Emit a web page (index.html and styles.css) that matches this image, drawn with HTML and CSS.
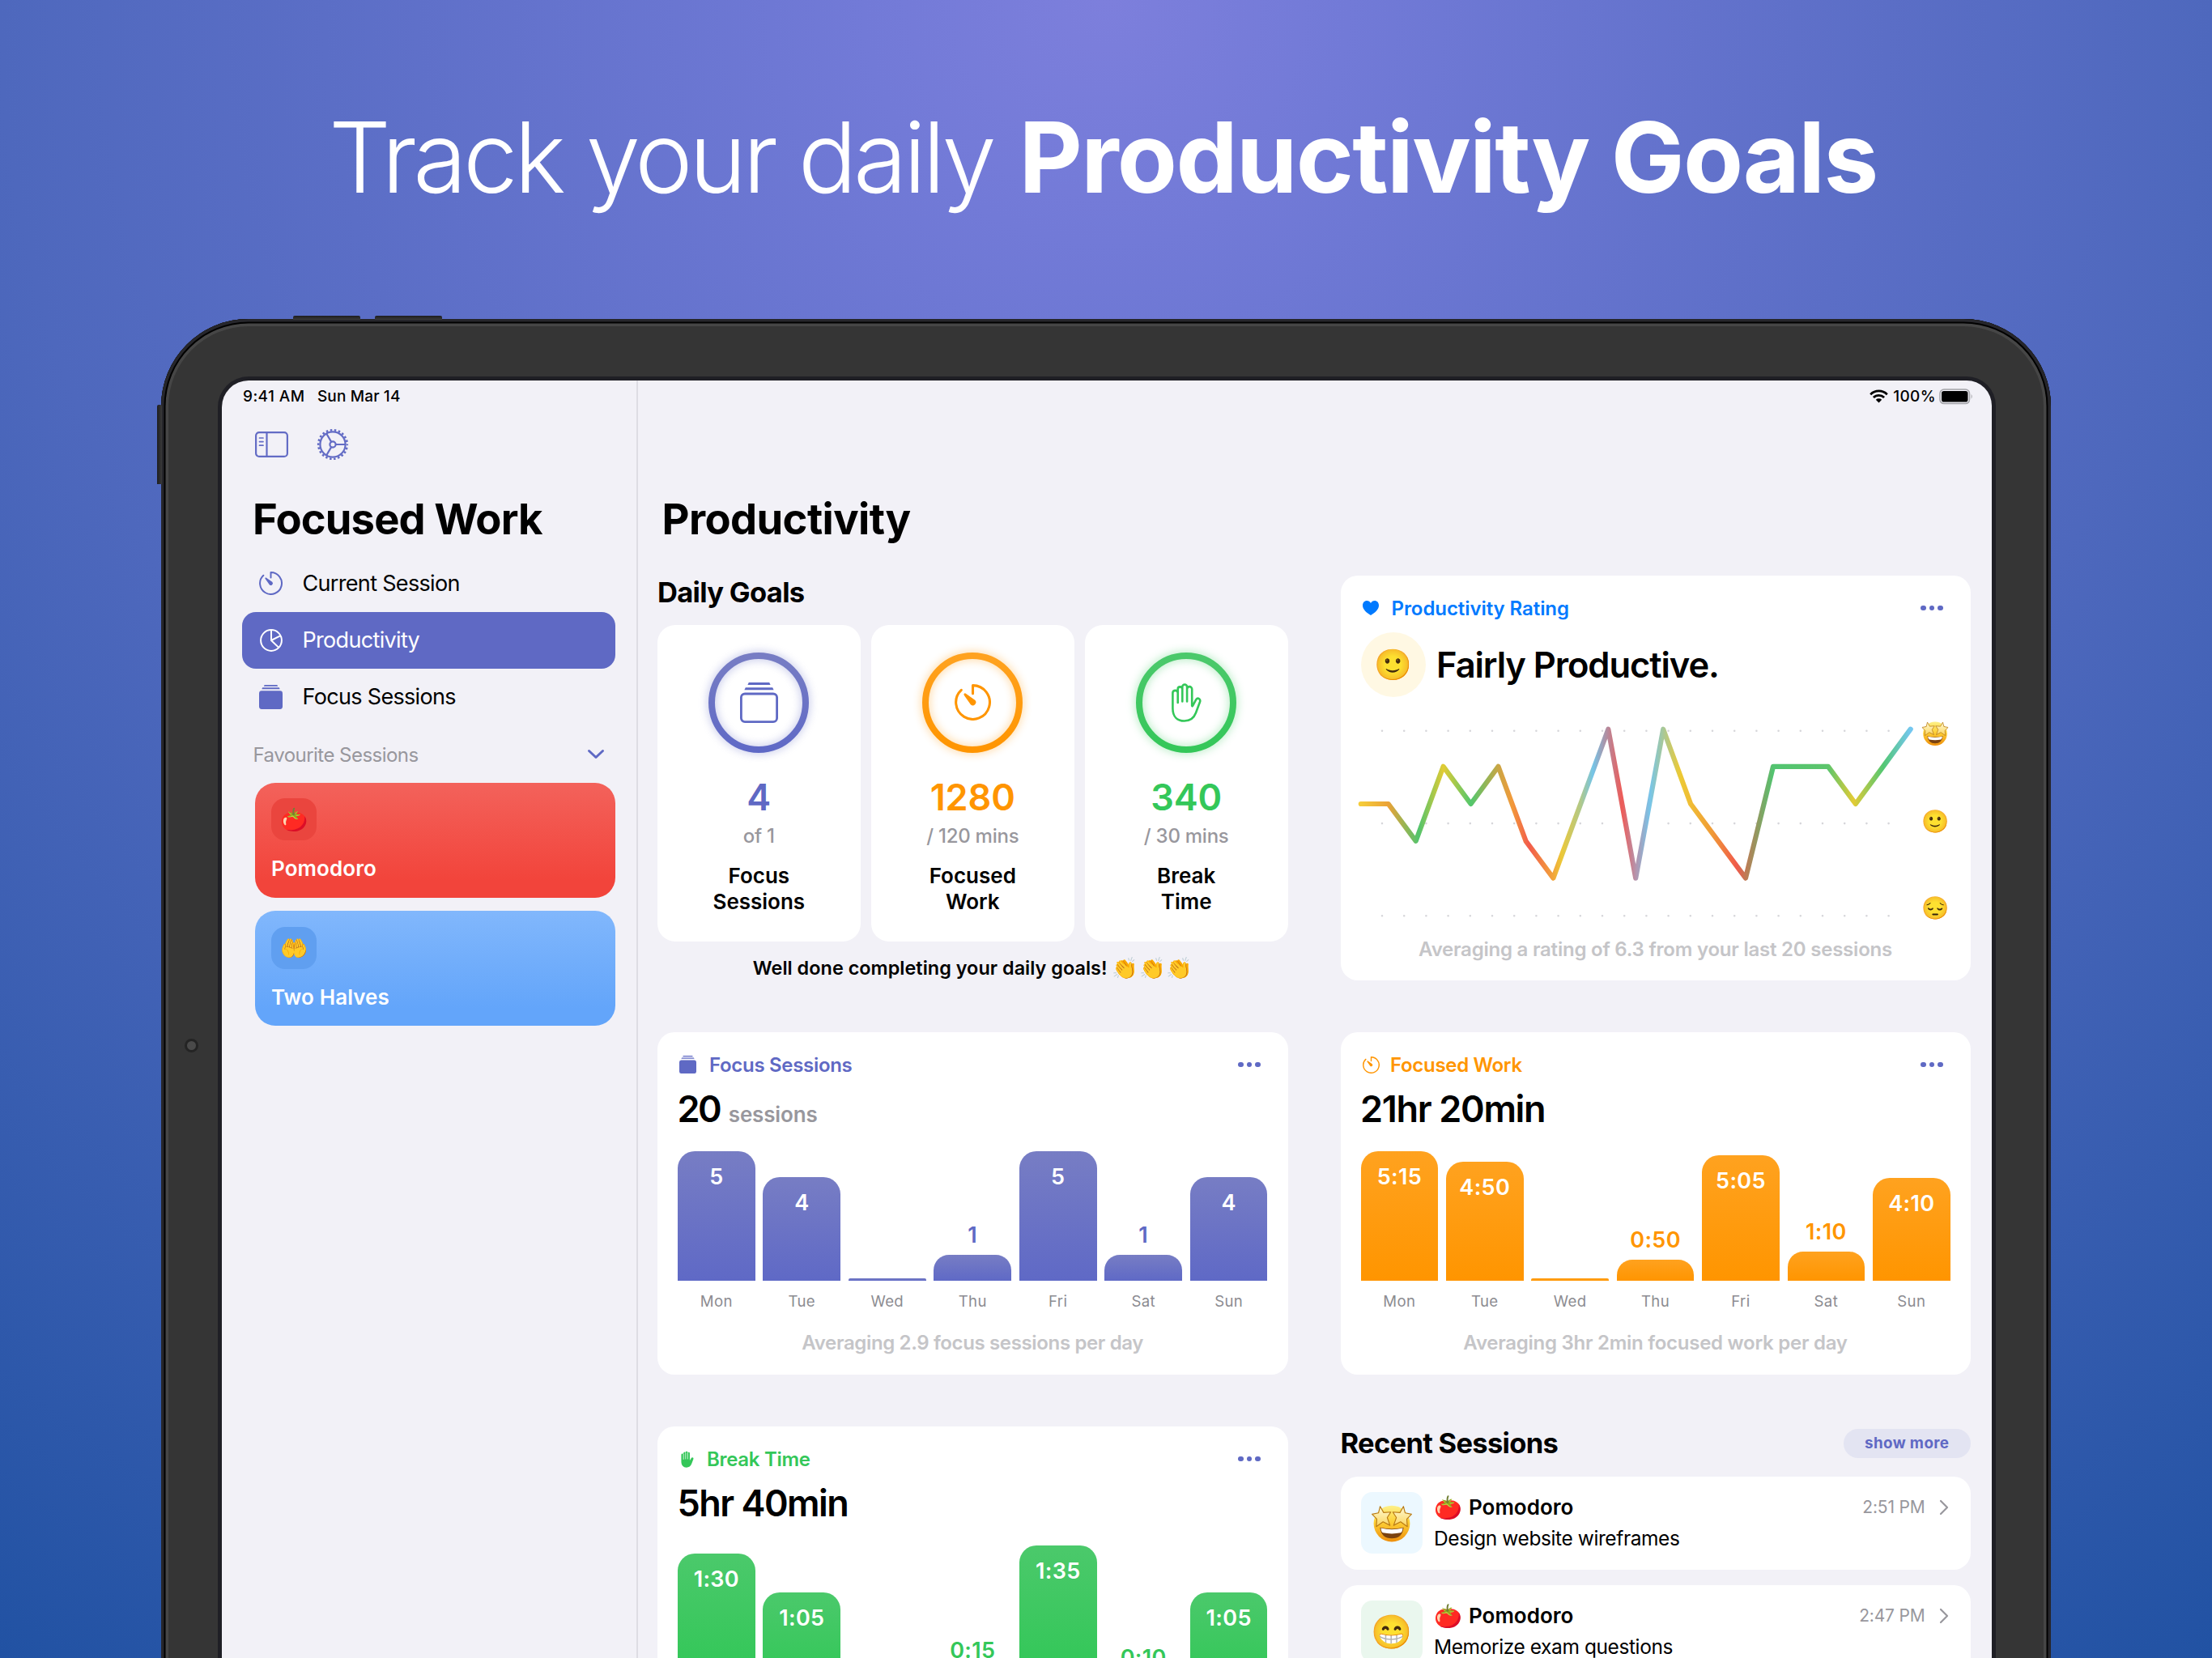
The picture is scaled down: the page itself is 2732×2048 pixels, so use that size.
FILE: index.html
```html
<!DOCTYPE html>
<html lang="en">
<head>
<meta charset="utf-8">
<title>Focused Work – Productivity</title>
<link rel="stylesheet" href="styles.css">
</head>
<body>
<svg class="defs" aria-hidden="true">
  <defs>
    <linearGradient id="g-purple" x1="0" y1="0" x2="0" y2="1"><stop offset="0" stop-color="#777dc4"/><stop offset="1" stop-color="#5f69c6"/></linearGradient>
    <linearGradient id="g-orange" x1="0" y1="0" x2="0" y2="1"><stop offset="0" stop-color="#ffa21f"/><stop offset="1" stop-color="#ff9500"/></linearGradient>
    <linearGradient id="g-green" x1="0" y1="0" x2="0" y2="1"><stop offset="0" stop-color="#4bc96b"/><stop offset="1" stop-color="#34c759"/></linearGradient>
    <linearGradient id="g-face" x1="0" y1="0" x2="0" y2="1"><stop offset="0" stop-color="#fdf18a"/><stop offset=".45" stop-color="#fdd037"/><stop offset="1" stop-color="#ee8f0c"/></linearGradient>
    <linearGradient id="g-star" x1="0" y1="0" x2="0" y2="1"><stop offset="0" stop-color="#fffbd6"/><stop offset="1" stop-color="#fbd45c"/></linearGradient>
    <symbol id="timer" viewBox="0 0 44 44">
      <path d="M22 11.5V1.6A20.4 20.4 0 1 1 8.1 7.1" fill="none" stroke="currentColor" stroke-width="3" stroke-linecap="round" stroke-linejoin="round"/>
      <path d="M11.6 13.6a1.4 1.4 0 0 1 2-2L24.6 19.4a3.6 3.6 0 1 1-5.2 5.2Z" fill="currentColor"/>
    </symbol>
    <symbol id="stack" viewBox="0 0 47 44" preserveAspectRatio="none">
      <path d="M10.8 0H36.2L37.6 2.500H9.4ZM6.8 4.800H40.2L41.6 7.600H5.4Z" fill="currentColor"/>
      <rect x="0" y="10.800" width="47" height="33.200" rx="5" fill="currentColor"/>
    </symbol>
    <symbol id="stack-line" viewBox="0 0 47 50">
      <path d="M10.8 0H36.2L37.6 3H9.4ZM6.8 6.2H40.2L41.6 9.2H5.4Z" fill="currentColor"/>
      <rect x="1.4" y="14" width="44.2" height="34.6" rx="4.6" fill="none" stroke="currentColor" stroke-width="2.8"/>
    </symbol>
    <symbol id="hand-line" viewBox="0 0 37 48">
      <path d="M7.7 24V11.5a3.2 3.2 0 0 0-6.3 0V31C1.4 41 7 46.5 15.8 46.5C23 46.5 27.5 43 30 36.5L35 23C36.2 19.4 32.4 17.2 30.2 20.2L26.6 27Q25.5 29.4 25.2 27.5V7.2a3 3 0 0 0-6.1 0M19.1 22.5V4.4a2.9 2.9 0 0 0-5.8 0V22.5M13.3 7.2a2.8 2.8 0 0 0-5.6 0V24M19.1 7V22.5" fill="none" stroke="currentColor" stroke-width="2.600" stroke-linecap="round" stroke-linejoin="round"/>
    </symbol>
    <symbol id="hand" viewBox="0 0 37 48">
      <path d="M1 11.5a3.2 3.2 0 0 1 6.3-1V7a3 3 0 0 1 6-1V4.2a3 3 0 0 1 6 0V6a3 3 0 0 1 6 1.2V27.5L30 20C32.4 17 37 19.4 35.6 23.2L30.6 37C28 44 23 47.6 15.8 47.6C7 47.6 1 41 1 31Z" fill="currentColor"/>
      <path d="M7.4 10V24M13.4 6V23M19.4 6V23" stroke="#fff" stroke-width="1.7" stroke-linecap="round"/>
    </symbol>
    <symbol id="heart" viewBox="0 0 20 18">
      <path d="M10 18C5 15 0 11 0 5.8C0 2.4 2.2 0 5.2 0C7.3 0 9 1.200 10 3C11 1.200 12.700 0 14.800 0C17.800 0 20 2.400 20 5.800C20 11 15 15 10 18Z" fill="currentColor"/>
    </symbol>
    <symbol id="star-face" viewBox="0 0 48 46">
      <circle cx="24" cy="24" r="21.500" fill="url(#g-face)"/>
      <path d="M10 28.500Q24 32 38 28.500Q36.500 41.500 24 41.500Q11.500 41.500 10 28.500Z" fill="#7a4210"/>
      <path d="M11 29.200Q24 32.500 37 29.200Q36.500 34 34.500 34.800Q24 37 13.500 34.800Q11.500 34 11 29.200Z" fill="#fff"/>
      <g fill="url(#g-star)" stroke="#b97a14" stroke-width="1.100" stroke-linejoin="round">
        <path d="M10.200 3.500L14.300 10.900L22.800 10.300L18.600 16.800L21.800 26L13.600 21.800L5.600 27.500L6.200 18.600L.6 12.800L8.200 11.300Z"/>
        <path d="M37.800 3.500L33.700 10.900L25.200 10.300L29.400 16.800L26.200 26L34.400 21.800L42.400 27.500L41.800 18.600L47.400 12.800L39.800 11.300Z"/>
      </g>
    </symbol>
  </defs>
</svg>

<h1 class="headline">Track your daily <strong>Productivity Goals</strong></h1>

<div class="device">
  <i class="key key-up"></i><i class="key key-down"></i><i class="key key-power"></i><i class="camera"></i>
  <div class="screen">
    <aside class="sidebar">
      <div class="status"><span class="time">9:41 AM</span><span>Sun Mar 14</span></div>
      <div class="toolbar">
        <svg width="41" height="32" viewBox="0 0 41 32" fill="none" stroke="currentColor" stroke-width="2.200" stroke-linecap="round"><rect x="1.100" y="1.100" width="38.800" height="29.800" rx="4"/><path d="M14.500 1V31" /><path d="M5.500 8H10M5.500 12.600H10M5.500 17.200H10" stroke-width="1.700"/></svg>
        <svg class="gear" width="40" height="40" viewBox="0 0 40 40" fill="none" stroke="currentColor" stroke-width="2.200"><circle cx="20" cy="20" r="15.600"/><circle cx="20" cy="20" r="17.800" stroke-width="2.600" stroke-dasharray="2.500 2.584" stroke-dashoffset="1.250"/><circle cx="20" cy="20" r="3.600"/><path d="M23.600 20H36M18.200 16.900L12 6.200M18.200 23.100L12 33.800"/></svg>
      </div>
      <h2 class="app-title">Focused Work</h2>
      <nav>
        <a class="nav-item"><svg width="29" height="29"><use href="#timer"/></svg>Current Session</a>
        <a class="nav-item active"><svg width="28" height="28" viewBox="0 0 28 28" fill="none" stroke="currentColor" stroke-width="2" stroke-linejoin="round"><circle cx="14" cy="14" r="12.900"/><path d="M14 1V14L23 22.600M14 14L25.600 8.200"/></svg>Productivity</a>
        <a class="nav-item"><svg width="29" height="30"><use href="#stack"/></svg>Focus Sessions</a>
      </nav>
      <div class="fav-head"><span>Favourite Sessions</span><svg width="22" height="14" viewBox="0 0 22 14"><path d="M2.500 2.500L11 10.500L19.500 2.500" fill="none" stroke="currentColor" stroke-width="3" stroke-linecap="round" stroke-linejoin="round"/></svg></div>
      <div class="fav red"><span class="tile">🍅</span><b>Pomodoro</b></div>
      <div class="fav blue"><span class="tile">🤲</span><b>Two Halves</b></div>
    </aside>

    <main class="main">
      <div class="status right">
        <svg width="23" height="17" viewBox="0 0 23 17"><g fill="none" stroke="#000" stroke-width="2.800"><path d="M1.200 6.200A14.600 14.600 0 0 1 21.800 6.200"/><path d="M4.900 10A9.400 9.400 0 0 1 18.100 10"/></g><path d="M7.800 12.800A5.400 5.400 0 0 1 15.200 12.800L11.500 16.600Z"/></svg>
        <span class="pct">100%</span>
        <svg width="42" height="20" viewBox="0 0 42 20"><rect x="1" y="1" width="36.500" height="17.600" rx="5" fill="none" stroke="#a3a3a8" stroke-width="1.500"/><rect x="3" y="3" width="32.500" height="13.600" rx="2.800"/><path d="M39.600 6.800Q41.800 9.800 39.600 12.800Z" fill="#a3a3a8"/></svg>
      </div>
      <h2 class="page-title">Productivity</h2>

      <div class="grid">
        <section class="goals">
          <h3 class="section-title">Daily Goals</h3>
          <div class="goal-row">
            <div class="goal purple">
              <div class="ring"><svg class="circle" viewBox="0 0 124 124"><circle cx="62" cy="62" r="58" stroke="url(#g-purple)"/></svg><svg width="47" height="50"><use href="#stack-line"/></svg></div>
              <b class="num">4</b><span class="of">of 1</span><span class="what">Focus<br>Sessions</span>
            </div>
            <div class="goal orange">
              <div class="ring"><svg class="circle" viewBox="0 0 124 124"><circle cx="62" cy="62" r="58" stroke="url(#g-orange)"/></svg><svg width="45" height="45"><use href="#timer"/></svg></div>
              <b class="num">1280</b><span class="of">/ 120 mins</span><span class="what">Focused<br>Work</span>
            </div>
            <div class="goal green">
              <div class="ring"><svg class="circle" viewBox="0 0 124 124"><circle cx="62" cy="62" r="58" stroke="url(#g-green)"/></svg><svg width="37" height="48"><use href="#hand-line"/></svg></div>
              <b class="num">340</b><span class="of">/ 30 mins</span><span class="what">Break<br>Time</span>
            </div>
          </div>
          <p class="praise">Well done completing your daily goals! <span class="claps"><i>👏</i><i>👏</i><i>👏</i></span></p>
        </section>

        <section class="card rating">
          <header class="card-head blue-text"><svg width="20" height="18"><use href="#heart"/></svg><span class="h-rating">Productivity Rating</span><span class="dots"><i></i><i></i><i></i></span></header>
          <div class="verdict"><span class="mood">🙂</span><b>Fairly Productive.</b></div>
          <svg class="line-chart" viewBox="0 0 778 290">
            <defs><linearGradient id="g-line" gradientUnits="userSpaceOnUse" x1="24.800" y1="0" x2="703.700" y2="0">
              <stop offset="0" stop-color="#f5cc3a"/><stop offset=".05" stop-color="#eba236"/><stop offset=".105" stop-color="#52c46d"/><stop offset=".15" stop-color="#e2cb34"/><stop offset=".2" stop-color="#52c76d"/><stop offset=".25" stop-color="#c9a645"/><stop offset=".275" stop-color="#f29a3a"/><stop offset=".306" stop-color="#f25b4c"/><stop offset=".35" stop-color="#f2a53a"/><stop offset=".365" stop-color="#ecc838"/><stop offset=".4" stop-color="#b0c98b"/><stop offset=".422" stop-color="#74c5e8"/><stop offset=".45" stop-color="#b98799"/><stop offset=".475" stop-color="#ee5b57"/><stop offset=".5" stop-color="#b594ad"/><stop offset=".526" stop-color="#77c5ea"/><stop offset=".55" stop-color="#a8c898"/><stop offset=".58" stop-color="#ecca35"/><stop offset=".6" stop-color="#f0bd35"/><stop offset=".638" stop-color="#f09b36"/><stop offset=".684" stop-color="#f0594b"/><stop offset=".7" stop-color="#bf7a55"/><stop offset=".75" stop-color="#52c470"/><stop offset=".85" stop-color="#5cc56c"/><stop offset=".896" stop-color="#e3cb35"/><stop offset=".95" stop-color="#52c772"/><stop offset="1" stop-color="#74c7f0"/>
            </linearGradient></defs>
            <g fill="none" stroke="#d6d6da" stroke-width="2.600" stroke-linecap="round" stroke-dasharray="0 27.200">
              <path d="M51 41.800H680"/><path d="M51 156.100H680"/><path d="M51 270.300H680"/>
            </g>
            <polyline fill="none" stroke="url(#g-line)" stroke-width="6.200" stroke-linecap="round" stroke-linejoin="round" points="24.8,132 58.7,132 92.700,177.800 126.600,85.800 160.600,132 194.500,85.800 228.500,177.800 262.400,223.600 330.300,39.700 364.200,223.600 398.200,39.700 432.100,132 466.100,177.800 500,223.600 534,85.800 601.900,85.800 635.800,132 669.800,85.800 703.700,39.700"/>
            <svg x="717.500" y="28" width="33" height="33"><use href="#star-face"/></svg>
            <text class="axis-face" x="734" y="163">🙂</text>
            <text class="axis-face" x="734" y="270">😔</text>
          </svg>
          <p class="foot f1">Averaging a rating of 6.3 from your last 20 sessions</p>
        </section>

        <section class="card bars purple">
          <header class="card-head"><svg width="21" height="22"><use href="#stack"/></svg><span>Focus Sessions</span><span class="dots"><i></i><i></i><i></i></span></header>
          <div class="total"><b class="tight">20</b><small>sessions</small></div>
          <div class="chart">
            <div class="bar" style="height:160px"><span>5</span></div>
            <div class="bar" style="height:128px"><span>4</span></div>
            <div class="bar nil" style="height:3px"></div>
            <div class="bar low" style="height:32px"><span>1</span></div>
            <div class="bar" style="height:160px"><span>5</span></div>
            <div class="bar low" style="height:32px"><span>1</span></div>
            <div class="bar" style="height:128px"><span>4</span></div>
          </div>
          <div class="days"><span>Mon</span><span>Tue</span><span>Wed</span><span>Thu</span><span>Fri</span><span>Sat</span><span>Sun</span></div>
          <p class="foot f2">Averaging 2.9 focus sessions per day</p>
        </section>

        <section class="card bars orange">
          <header class="card-head"><svg width="21" height="21"><use href="#timer"/></svg><span class="h-work">Focused Work</span><span class="dots"><i></i><i></i><i></i></span></header>
          <div class="total"><b>21hr 20min</b></div>
          <div class="chart">
            <div class="bar" style="height:160px"><span>5:15</span></div>
            <div class="bar" style="height:147px"><span>4:50</span></div>
            <div class="bar nil" style="height:3px"></div>
            <div class="bar low" style="height:25.500px"><span>0:50</span></div>
            <div class="bar" style="height:155px"><span>5:05</span></div>
            <div class="bar low" style="height:35.500px"><span>1:10</span></div>
            <div class="bar" style="height:127px"><span>4:10</span></div>
          </div>
          <div class="days"><span>Mon</span><span>Tue</span><span>Wed</span><span>Thu</span><span>Fri</span><span>Sat</span><span>Sun</span></div>
          <p class="foot f2 f3">Averaging 3hr 2min focused work per day</p>
        </section>

        <section class="card bars tall green">
          <header class="card-head hand-head"><svg width="16" height="21"><use href="#hand"/></svg><span>Break Time</span><span class="dots"><i></i><i></i><i></i></span></header>
          <div class="total"><b>5hr 40min</b></div>
          <div class="chart">
            <div class="bar" style="height:173px"><span>1:30</span></div>
            <div class="bar" style="height:125px"><span>1:05</span></div>
            <div class="bar nil" style="height:3px"></div>
            <div class="bar low" style="height:29px"><span>0:15</span></div>
            <div class="bar" style="height:183px"><span>1:35</span></div>
            <div class="bar low" style="height:19.500px"><span>0:10</span></div>
            <div class="bar" style="height:125px"><span>1:05</span></div>
          </div>
        </section>

        <section class="recent">
          <div class="recent-head"><h3 class="section-title">Recent Sessions</h3><button class="more">show more</button></div>
          <div class="list">
            <article class="item">
              <span class="item-tile sky"><svg width="50" height="48"><use href="#star-face"/></svg></span>
              <div class="item-text"><p class="item-title"><i>🍅</i>Pomodoro</p><p class="item-sub">Design website wireframes</p></div>
              <span class="when">2:51 PM<svg width="12" height="20" viewBox="0 0 12 20"><path d="M2 2L10 10L2 18" fill="none" stroke="currentColor" stroke-width="2.200" stroke-linecap="round" stroke-linejoin="round"/></svg></span>
            </article>
            <article class="item">
              <span class="item-tile mint">😁</span>
              <div class="item-text"><p class="item-title"><i>🍅</i>Pomodoro</p><p class="item-sub">Memorize exam questions</p></div>
              <span class="when">2:47 PM<svg width="12" height="20" viewBox="0 0 12 20"><path d="M2 2L10 10L2 18" fill="none" stroke="currentColor" stroke-width="2.200" stroke-linecap="round" stroke-linejoin="round"/></svg></span>
            </article>
          </div>
        </section>
      </div>
    </main>
  </div>
</div>
</body>
</html>
```
FILE: styles.css
```css
* { box-sizing: border-box; margin: 0; padding: 0; }
html { height: 100%; }
body {
  width: 2732px;
  height: 2048px;
  overflow: hidden;
  font-family: Inter, "Noto Sans", "Noto Color Emoji", sans-serif;
  color: #000;
  background: radial-gradient(circle 2462px at 1366px 0, #7d7fdc 0, #727ad7 300px, #5b6ec6 966px, #4e68bd 1366px, #2152a3 2462px);
}
i { font-style: normal; }
.defs { position: absolute; width: 0; height: 0; }

.headline {
  height: 394px;
  padding: 124px 0 0 406px;
  font-size: 121px;
  line-height: 140px;
  font-weight: 340;
  letter-spacing: -.0385em;
  color: #fff;
  white-space: nowrap;
}
.headline strong { font-weight: 700; letter-spacing: -.0135em; margin-left: 3px; }

/* Tablet body */
.device {
  position: relative;
  width: 2334px;
  height: 1654px;
  margin-left: 199px;
  padding: 76px 73px 0 75px;
  border-radius: 108px 108px 0 0;
  background: #353535;
  box-shadow: inset 0 3.500px #26262b, inset 3.500px 0 #26262b, inset -3.500px 0 #26262b;
}
.device::before {
  content: "";
  position: absolute;
  inset: 0 0 -20px;
  border-radius: inherit;
  clip-path: inset(0 0 20px);
  box-shadow: inset 0 0 0 3.500px #26262b, inset 0 0 0 5.500px #000, inset 0 0 0 9px #464646;
}
.key { position: absolute; background: linear-gradient(#1d1d1f, #3a3a3a); border-radius: 2px 2px 0 0; }
.key-up { left: 163px; top: -4px; width: 83px; height: 5px; }
.key-down { left: 264px; top: -4px; width: 83px; height: 5px; }
.key-power { left: -5px; top: 106px; width: 6px; height: 98px; background: linear-gradient(90deg, #1d1d1f, #3a3a3a); }
.camera { position: absolute; left: 29px; top: 889px; width: 17px; height: 17px; border-radius: 50%; background: #4a4a4a; border: 3px solid #242424; }
.screen {
  position: relative;
  display: flex;
  width: 2186px;
  height: 1578px;
  border-radius: 33px 31px 0 0;
  background: #f2f1f7;
  box-shadow: 0 0 0 5px #1f1f25;
  clip-path: inset(-5px -5px 0);
}

.status { display: flex; align-items: center; height: 39px; font-size: 19px; font-weight: 500; letter-spacing: .008em; }
.sidebar .status { padding-left: 26px; gap: 15.500px; }
.time { letter-spacing: .022em; }
.status.right { justify-content: flex-end; padding-right: 23px; }
.pct { letter-spacing: .02em; margin: 0 4px 0 6px; }

/* Sidebar */
.sidebar { width: 514px; border-right: 2px solid #dedde4; flex: none; }
.toolbar { display: flex; align-items: center; height: 79px; padding-left: 41px; gap: 35px; color: #636cc5; }
.app-title { height: 97.500px; padding: 7.500px 0 0 38px; font-size: 52.500px; line-height: 90px; letter-spacing: -.0165em; }
.nav-item {
  display: grid;
  grid-template-columns: 33px 1fr;
  align-items: center;
  justify-items: start;
  column-gap: 22.500px;
  height: 70px;
  margin: 0 26px 0 25px;
  padding-left: 19px;
  border-radius: 17px;
  font-size: 27px;
  letter-spacing: -.025em;
}
.nav-item svg { justify-self: center; color: #5f69c4; }
.nav-item.active { background: #5f69c4; color: #fff; }
.nav-item.active svg { color: #fff; }
.fav-head { display: flex; align-items: center; justify-content: space-between; height: 71px; padding: 2px 39px 0 38.500px; font-size: 24px; letter-spacing: -.022em; color: #98979d; }
.fav-head svg { color: #5f69c4; }
.fav {
  display: flex;
  flex-direction: column;
  height: 142px;
  margin: 0 26px 16.500px 41px;
  padding: 19.500px 20px 0;
  border-radius: 25px;
  color: #fff;
}
.fav b { font-size: 26px; font-weight: 600; line-height: 30px; margin-top: 20px; letter-spacing: .003em; }
.red { background: linear-gradient(#f3625b, #f2443b 85%); }
.blue { background: linear-gradient(#81b7fc, #63a5fa 85%); }
.tile { display: grid; place-items: center; width: 56px; height: 52px; border-radius: 17px; font-size: 27.500px; line-height: 52px; }
.red .tile { background: #ea453e; }
.blue .tile { background: #609ff0; }

/* Main column */
.main { flex: 1; }
.page-title { height: 201.500px; padding: 86.500px 0 0 29.500px; font-size: 52.500px; line-height: 90px; letter-spacing: -.0113em; }
.grid { display: grid; grid-template-columns: 778.500px 778px; grid-template-rows: 500px 423px; gap: 64px 65px; padding-left: 24px; }
.section-title { font-size: 34.500px; line-height: 42px; font-weight: 700; letter-spacing: -.02em; }
.card { background: #fff; border-radius: 21px; }

.purple { color: #5f69c4; }
.orange { color: #ff9500; }
.green { color: #34c759; }
.blue-text { color: #007aff; }

.goals .section-title { margin-bottom: 19.500px; }
.goal-row { display: grid; grid-template-columns: repeat(3, 1fr); gap: 13.300px; }
.goal { display: flex; flex-direction: column; align-items: center; height: 391px; padding-top: 33.500px; background: #fff; border-radius: 22px; }
.ring { display: grid; place-items: center; width: 124px; height: 124px; }
.ring svg { grid-area: 1 / 1; }
.circle { width: 124px; height: 124px; overflow: visible; filter: drop-shadow(0 0 6px color-mix(in srgb, currentColor 45%, transparent)); }
.circle circle { fill: none; stroke-width: 8px; }
.num { margin-top: 31px; font-size: 45px; line-height: 48px; font-weight: 600; letter-spacing: -.002em; }
.of { margin-top: 9px; font-size: 24px; line-height: 30px; font-weight: 500; letter-spacing: -.0102em; color: #98979d; }
.what { margin-top: 18px; text-align: center; font-size: 26px; line-height: 32.700px; font-weight: 600; letter-spacing: 0; color: #000; }
.praise { display: flex; align-items: center; justify-content: center; height: 30px; margin-top: 17.500px; font-size: 23.400px; line-height: 30px; font-weight: 600; letter-spacing: .0015em; }
.claps { display: flex; gap: 1px; margin-left: 6px; letter-spacing: 0; font-size: 26px; }

.card-head { display: flex; align-items: center; height: 81px; padding: 0 34px 0 27px; font-size: 24px; font-weight: 600; letter-spacing: -.0128em; }
.card-head > span:first-of-type { margin-left: 16px; flex: 1; }
.card-head .h-rating { letter-spacing: -.003em; }
.card-head > .h-work:first-of-type { margin-left: 13.500px; }
.hand-head { padding-left: 29px; }
.dots { display: flex; gap: 3.800px; color: #5f69c4; }
.dots i { width: 6.600px; height: 6.600px; border-radius: 50%; background: currentColor; }

.rating { height: 500px; }
.rating .card-head { height: 70px; padding-top: 11px; }
.verdict { display: flex; align-items: center; height: 80px; padding-left: 25.500px; gap: 13px; }
.verdict b { font-size: 43.500px; font-weight: 600; letter-spacing: -.025em; }
.mood { display: grid; place-items: center; width: 80px; height: 80px; border-radius: 50%; background: #fff8e3; font-size: 37.500px; }
.line-chart { display: block; width: 778px; height: 290px; }
.axis-face { font-size: 27.500px; text-anchor: middle; }
.foot { text-align: center; font-size: 24px; line-height: 43px; font-weight: 600; color: #c5c5c8; }
.f1 { letter-spacing: -.0092em; }
.f2 { letter-spacing: -.0148em; margin-top: 18px; }
.f3 { letter-spacing: -.011em; }

.bars { height: 423px; }
.total { display: flex; align-items: baseline; height: 66px; padding: 0 24.500px; line-height: 27px; color: #000; }
.total b { font-size: 45px; font-weight: 600; letter-spacing: -.029em; }
.total .tight { letter-spacing: -.055em; }
.total small { margin-left: 10.500px; font-size: 26px; font-weight: 600; letter-spacing: -.0064em; color: #98979d; }
.chart { display: flex; align-items: flex-end; gap: 9.800px; height: 160px; margin: 0 25px; }
.tall { height: 440px; }
.tall .chart { height: 183px; }
.tall .total b { letter-spacing: -.034em; }
.bar { flex: 1; border-radius: 21px 21px 0 0; text-align: center; font-size: 27px; line-height: 64px; font-weight: 600; letter-spacing: .012em; color: #fff; }
.bar span { display: block; }
.nil { border-radius: 2px 2px 0 0; }
.low { border-radius: 19px 19px 0 0; }
.low span { margin-top: -56px; }
.purple .bar { background: linear-gradient(#777dc4, #5f69c6); }
.orange .bar { background: linear-gradient(#ffa21f, #ff9500); }
.green .bar { background: linear-gradient(#4bc96b, #34c759 80%); }
.purple .low span { color: #5f69c4; }
.orange .low span { color: #ff9500; }
.green .low span { color: #34c759; }
.days { display: flex; gap: 9.800px; margin: 13px 25px 0; font-size: 18.600px; line-height: 24px; letter-spacing: .018em; color: #8c8c91; }
.days span { flex: 1; text-align: center; }

.recent { padding-top: 3px; }
.recent-head { display: flex; align-items: center; justify-content: space-between; height: 36.500px; margin-bottom: 22.500px; }
.more { width: 156.500px; height: 36.500px; border: 0; border-radius: 18.500px; background: #e3e4f2; font: 700 18.800px/36px Inter, sans-serif; letter-spacing: .02em; color: #5f69c4; }
.list { display: grid; gap: 19px; }
.item { display: flex; height: 115px; padding: 19px 27px 0 25px; background: #fff; border-radius: 21px; }
.item-tile { display: grid; place-items: center; width: 76.500px; height: 76.500px; border-radius: 14px; font-size: 41px; line-height: 76px; }
.sky { background: #ecf8ff; }
.mint { background: #eaf7ee; }
.item-text { flex: 1; margin-left: 14px; }
.item-title { display: flex; font-size: 26px; line-height: 38.500px; font-weight: 600; }
.item-title i { width: 43px; font-size: 28px; }
.item-sub { font-size: 24.500px; line-height: 38.500px; letter-spacing: -.0167em; }
.when { display: flex; align-items: center; height: 38.500px; gap: 17px; font-size: 21px; letter-spacing: -.0086em; color: #98979d; }
```
